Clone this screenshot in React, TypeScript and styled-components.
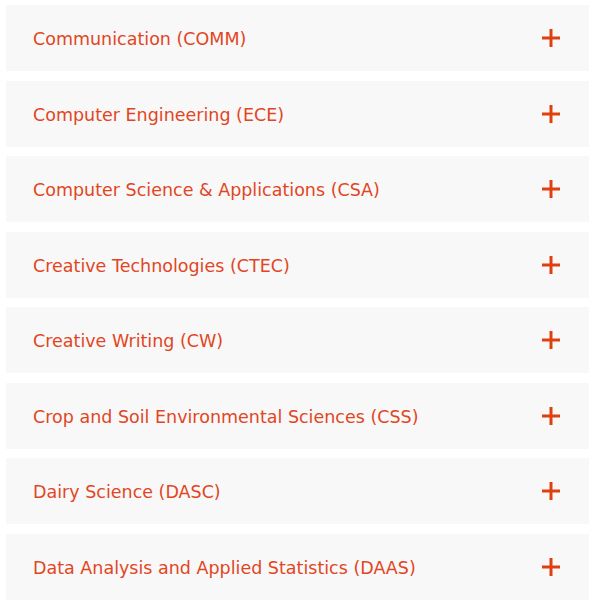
import React from 'react';
import styled, { createGlobalStyle } from 'styled-components';

const GlobalStyle = createGlobalStyle`
  body {
    margin: 0;
    background: #ffffff;
    font-family: "DejaVu Sans", "Noto Sans", sans-serif;
  }
`;

const List = styled.div`
  display: flex;
  flex-direction: column;
  gap: 9.5px;
  padding: 5px 4px 0 6px;
`;

const Item = styled.div`
  height: 66px;
  background: #f8f8f8;
  display: flex;
  align-items: center;
  justify-content: space-between;
  padding: 0 29px 0 27px;
  cursor: pointer;
`;

const Title = styled.span`
  font-size: 17.5px;
  color: #e2461f;
  padding-top: 2px;
`;

const Plus = styled.svg`
  width: 18px;
  height: 18px;
  flex-shrink: 0;
`;

const programs = [
  'Communication (COMM)',
  'Computer Engineering (ECE)',
  'Computer Science & Applications (CSA)',
  'Creative Technologies (CTEC)',
  'Creative Writing (CW)',
  'Crop and Soil Environmental Sciences (CSS)',
  'Dairy Science (DASC)',
  'Data Analysis and Applied Statistics (DAAS)',
];

const App: React.FC = () => (
  <>
    <GlobalStyle />
    <List>
      {programs.map((p) => (
        <Item key={p}>
          <Title>{p}</Title>
          <Plus viewBox="0 0 18 18">
            <path d="M9 0v18M0 9h18" stroke="#e0400f" strokeWidth="3" />
          </Plus>
        </Item>
      ))}
    </List>
  </>
);

export default App;
